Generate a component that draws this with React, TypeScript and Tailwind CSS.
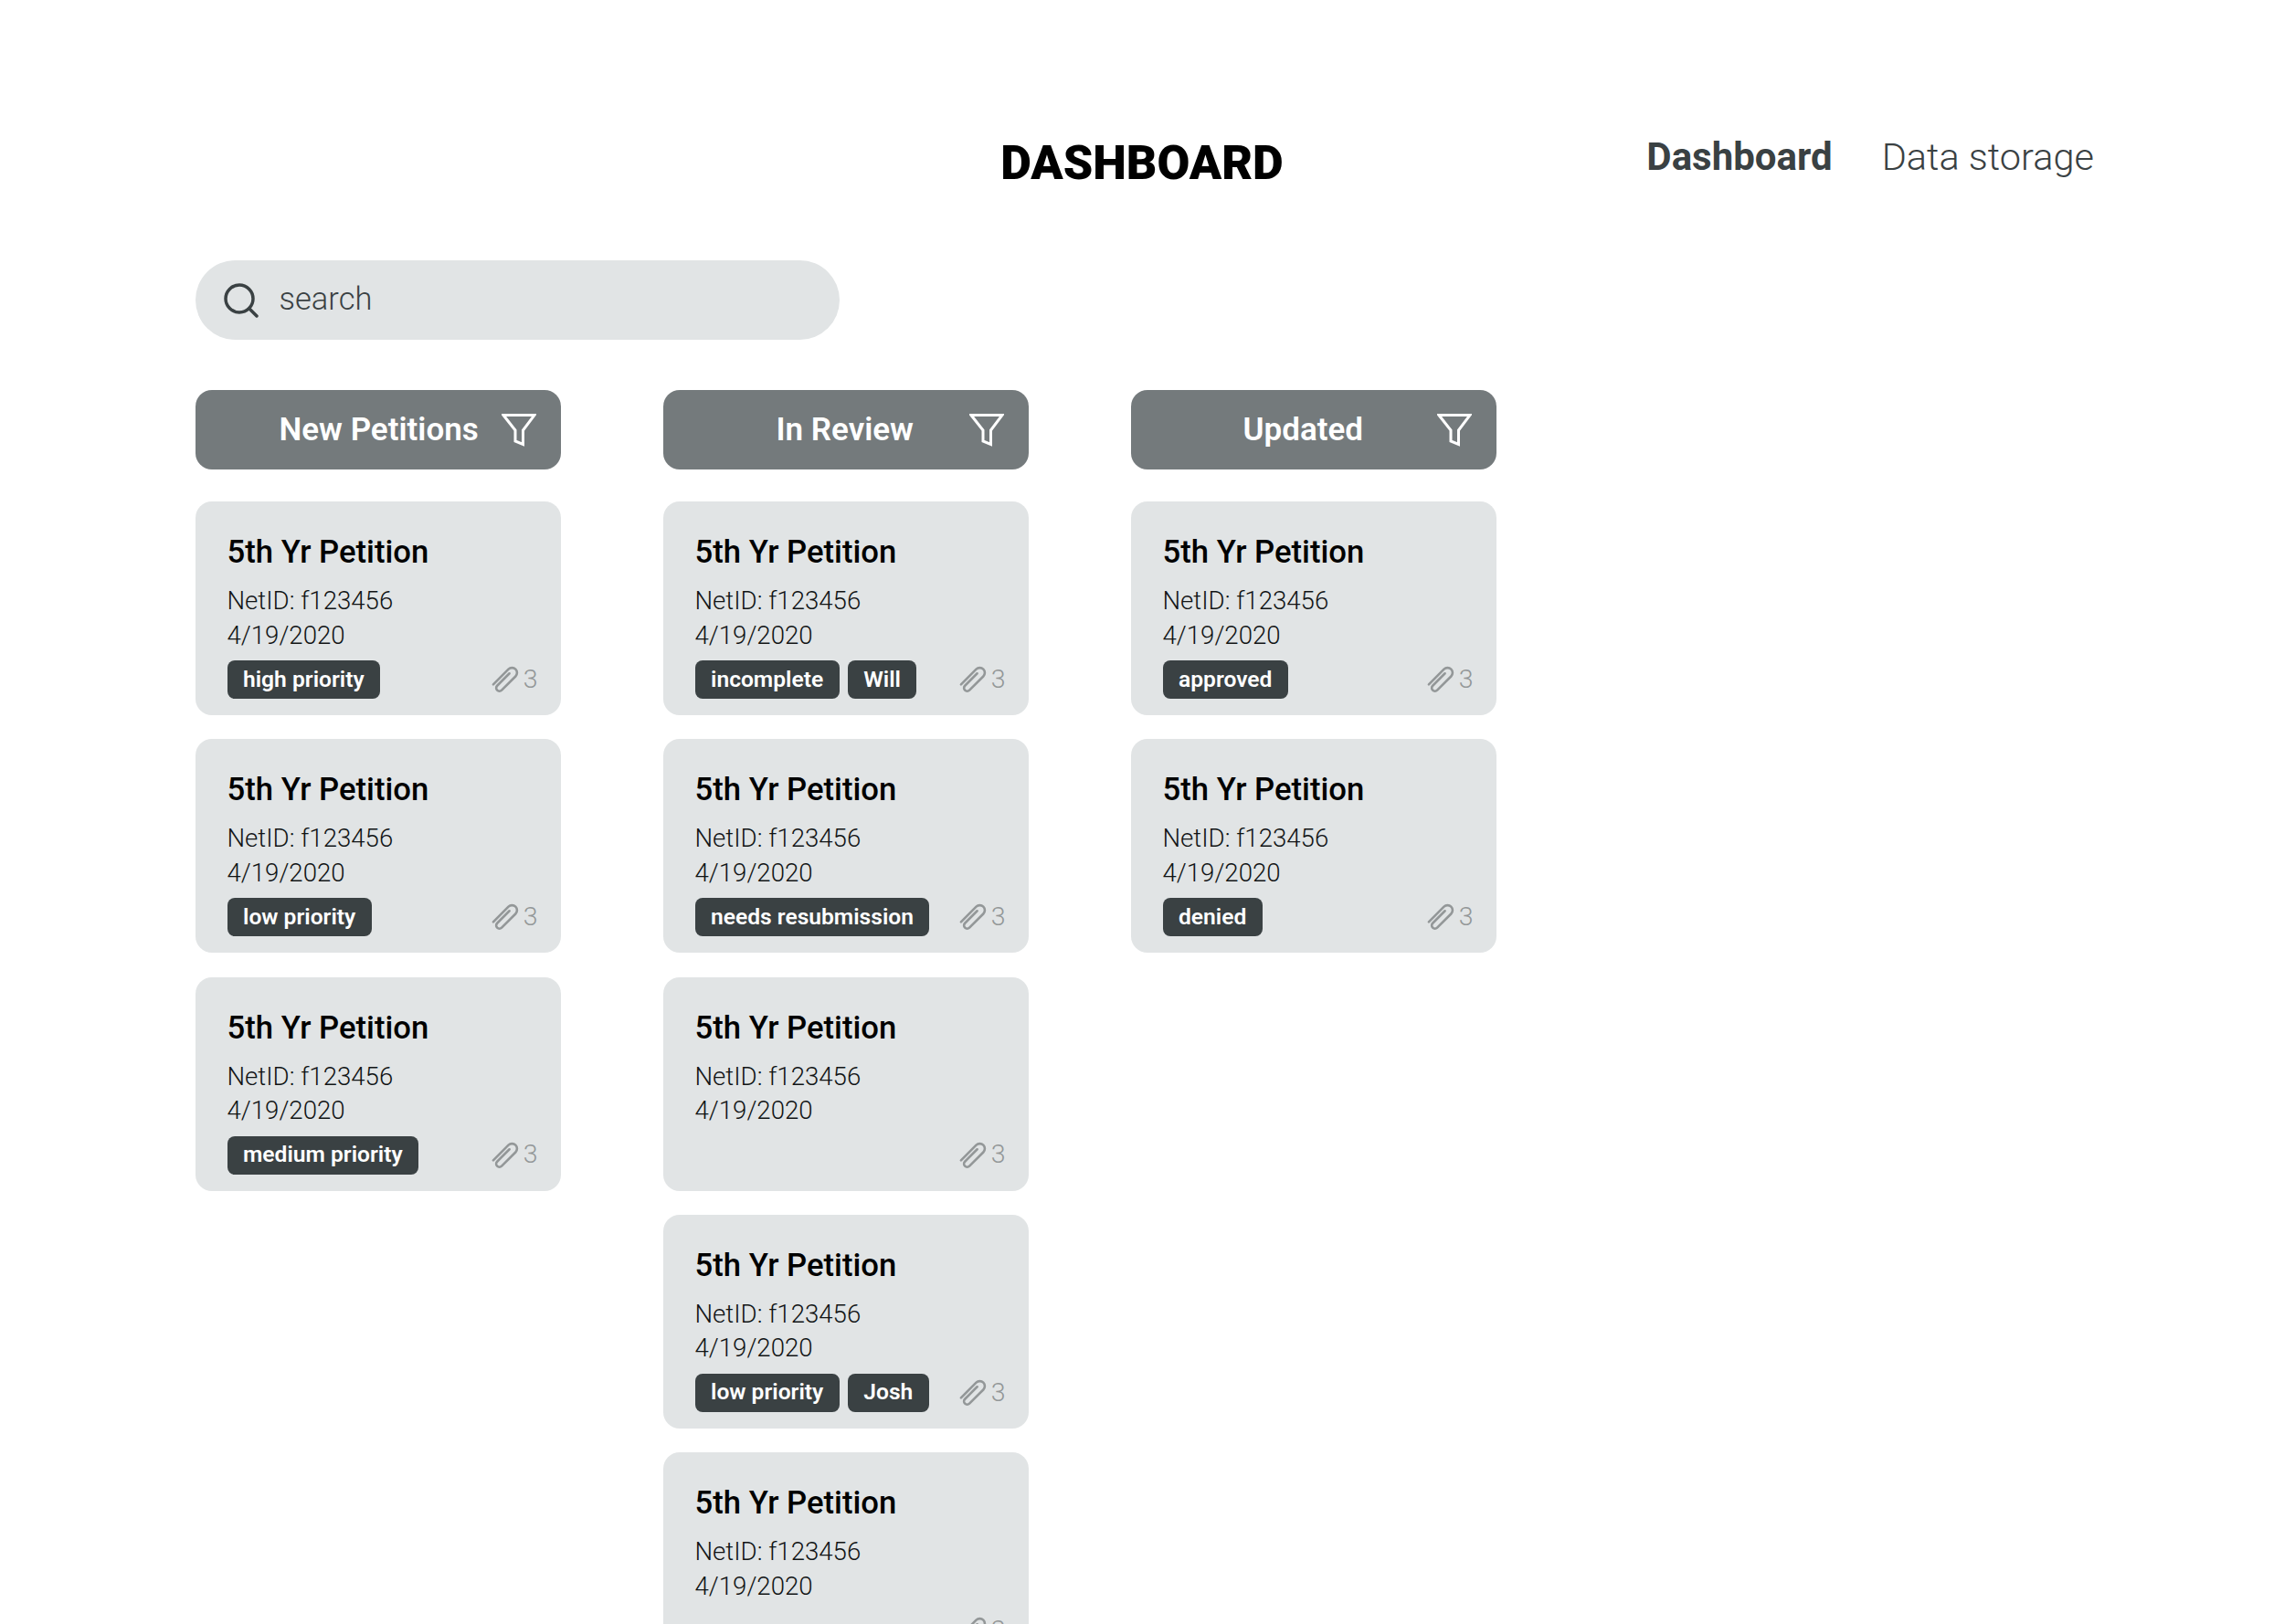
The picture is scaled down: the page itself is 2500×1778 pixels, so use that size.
type Petition = { tags: string[] };

const columns: { title: string; titleClass: string; cards: Petition[] }[] = [
  {
    title: "New Petitions",
    titleClass: "ml-[92px]",
    cards: [
      { tags: ["high priority"] },
      { tags: ["low priority"] },
      { tags: ["medium priority"] },
    ],
  },
  {
    title: "In Review",
    titleClass: "ml-[124px]",
    cards: [
      { tags: ["incomplete", "Will"] },
      { tags: ["needs resubmission"] },
      { tags: [] },
      { tags: ["low priority", "Josh"] },
      { tags: [] },
    ],
  },
  {
    title: "Updated",
    titleClass: "ml-[123px]",
    cards: [{ tags: ["approved"] }, { tags: ["denied"] }],
  },
];

function ClipIcon() {
  return (
    <svg width="30" height="30" viewBox="0 0 30 30" fill="none" stroke="currentColor" strokeWidth="2.6" strokeLinecap="round">
      <g transform="translate(15 15) rotate(45) translate(-7 -17)">
        <path d="M1.5 30V6.5a5.5 5.5 0 0 1 11 0V28a3.5 3.5 0 0 1-7 0V9" />
      </g>
    </svg>
  );
}

function FunnelIcon() {
  return (
    <svg width="38" height="36" viewBox="0 0 38 36" fill="none" stroke="currentColor" strokeWidth="3" className="ml-auto">
      <path d="M2 1.5H36L23.5 18V33.5L15 30V18Z" />
    </svg>
  );
}

function SearchIcon() {
  return (
    <svg width="38" height="38" viewBox="0 0 38 38" fill="none" stroke="currentColor" strokeWidth="3.5" strokeLinecap="round">
      <circle cx="17" cy="17" r="15" />
      <path d="M28 28L36 36" />
    </svg>
  );
}

function PetitionCard({ tags }: Petition) {
  return (
    <div className="h-[234px] shrink-0 rounded-[18px] bg-[#e1e4e5] pl-[35px] pr-[25px] pt-[33px]">
      <h3 className="text-[34.7px] leading-[44px] font-medium text-black">5th Yr Petition</h3>
      <p className="mt-[13px] text-[27.6px] leading-[37.5px] font-light text-[#111415]">NetID: f123456</p>
      <p className="text-[27.6px] leading-[37.5px] font-light text-[#111415]">4/19/2020</p>
      <div className="mt-[9px] flex h-[42px] items-center">
        <div className="flex gap-[9px]">
          {tags.map((tag) => (
            <span
              key={tag}
              className="flex h-[42px] items-center rounded-[8px] bg-[#3a4143] px-[17.5px] text-[24.6px] font-semibold text-white"
            >
              {tag}
            </span>
          ))}
        </div>
        <div className="ml-auto flex items-center gap-[5px] text-[#939798]">
          <ClipIcon />
          <span className="text-[28.5px] font-light">3</span>
        </div>
      </div>
    </div>
  );
}

export default function App() {
  return (
    <div className="h-[1778px] overflow-hidden bg-white pl-[213.5px] font-['Roboto',sans-serif]">
      <header className="grid grid-cols-[1fr_auto_1fr] items-center pt-[148px]">
        <div className="-ml-[213.5px]"></div>
        <h1 className="-ml-[213.5px] text-[52px] leading-[62px] font-black text-black">DASHBOARD</h1>
        <nav className="flex justify-end gap-[54px] pr-[208px] -mt-[15px] text-[42px] leading-[50px] text-[#3a4143]">
          <span className="font-bold">Dashboard</span>
          <span className="text-[41.5px] font-light">Data storage</span>
        </nav>
      </header>

      <div className="mt-[75px] flex h-[87px] w-[705px] items-center rounded-full bg-[#e1e4e5] pl-[31px] text-[#3a4143]">
        <SearchIcon />
        <span className="ml-[23px] -mt-[2px] text-[34.5px] font-light">search</span>
      </div>

      <div className="mt-[55px] flex gap-[112px]">
        {columns.map((col) => (
          <section key={col.title} className="w-[400px]">
            <div className="flex h-[87px] items-center rounded-[18px] bg-[#747a7c] pr-[27px] text-white">
              <span className={`mt-[1px] text-[35px] font-semibold ${col.titleClass}`}>{col.title}</span>
              <FunnelIcon />
            </div>
            <div className="mt-[35px] flex flex-col gap-[26.3px]">
              {col.cards.map((card, i) => (
                <PetitionCard key={i} tags={card.tags} />
              ))}
            </div>
          </section>
        ))}
      </div>
    </div>
  );
}
